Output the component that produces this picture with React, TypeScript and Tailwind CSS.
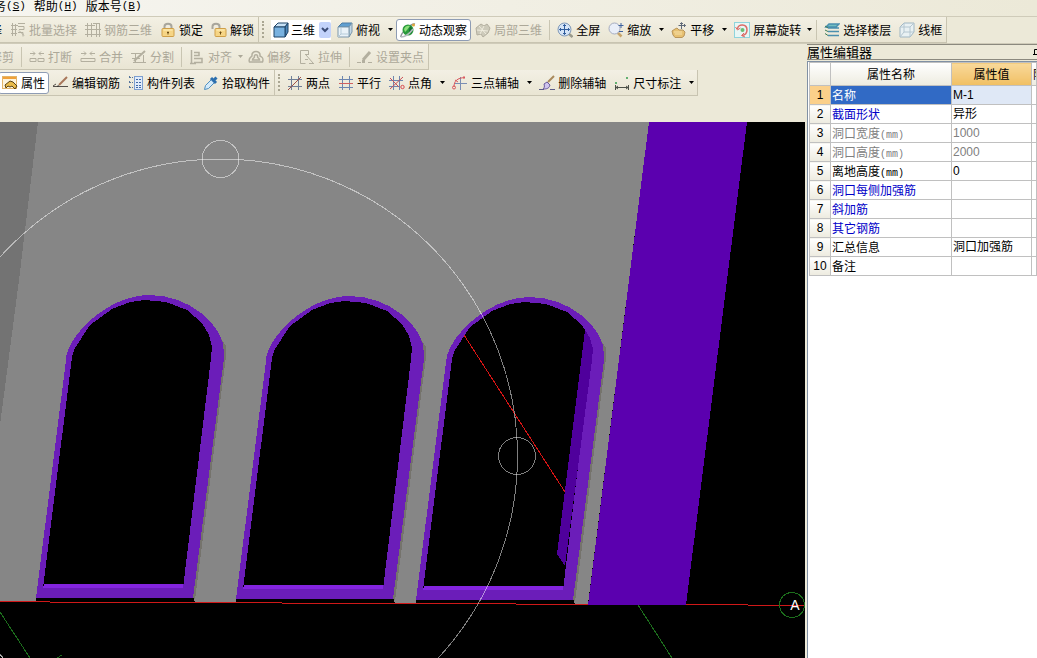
import React from 'react';
import clsx from 'clsx';

type IconProps = { children: React.ReactNode };

function Icon({ children }: IconProps) {
  return (
    <svg viewBox="0 0 16 16" className="h-4 w-4 shrink-0" fill="none" aria-hidden="true">
      {children}
    </svg>
  );
}

const GRAY = '#b3af9f';

const icons = {
  batch: (
    <Icon>
      <path d="M2.5 1v13M5.5 2v12M1 3.5h7M1 7.5h6M1 11.5h6M8 1.5h7M8 4.5h6v3H9M8 10.5h5v4M9 8.5l5 5" stroke={GRAY} />
    </Icon>
  ),
  rebar3d: (
    <Icon>
      <path d="M2.5 1v14M6.5 1v14M11.5 1v14M14.5 1v14M0 3.5h10M0 7.5h16M0 12.5h16M8 1.5h7" stroke={GRAY} />
    </Icon>
  ),
  lock: (
    <Icon>
      <path d="M4.5 8V4.5C4.5 .8 11.5 .8 11.5 4.5V8" stroke="#a8a69c" strokeWidth="2" />
      <rect x="2" y="6.5" width="12" height="8" rx="1" fill="#f6d585" stroke="#cf9f48" />
      <path d="M3.5 8h9" stroke="#fff1bd" />
      <path d="M8 9.5v3M7 10.5h2" stroke="#6b4a12" />
    </Icon>
  ),
  unlock: (
    <Icon>
      <path d="M1.5 7V4.5C1.5 .8 8.5 .8 8.5 4.5V7" stroke="#a8a69c" strokeWidth="2" />
      <rect x="4" y="6.5" width="11" height="8" rx="1" fill="#f6d585" stroke="#cf9f48" />
      <path d="M5.5 8h8" stroke="#fff1bd" />
      <path d="M9.5 9.5v3M8.5 10.5h2" stroke="#6b4a12" />
    </Icon>
  ),
  cube: (
    <Icon>
      <path d="M1 5l4-4h10l-3 4z" fill="#c9e2f6" stroke="#1f4468" strokeLinejoin="round" />
      <path d="M12 5l3-4v9l-3 5z" fill="#4d86b8" stroke="#1f4468" strokeLinejoin="round" />
      <path d="M1 5h11v10H1z" fill="#79b2e0" stroke="#1f4468" strokeLinejoin="round" />
    </Icon>
  ),
  topView: (
    <Icon>
      <path d="M1 5l4-4h10l-3 4z" fill="#5f9fd0" stroke="#4c7da5" strokeLinejoin="round" />
      <path d="M12 5l3-4v9l-3 5z" fill="#c3d8e8" stroke="#7d97aa" strokeLinejoin="round" />
      <path d="M1 5h11v10H1z" fill="#e9f2f8" stroke="#7d97aa" strokeLinejoin="round" />
      <path d="M4 6v6l-3 3M4 12h8" stroke="#b6cbd9" />
    </Icon>
  ),
  orbit: (
    <Icon>
      <path d="M1 15C0 12 11 1 15 2" stroke="#8b9298" strokeWidth="1.5" />
      <circle cx="8" cy="8" r="5.5" fill="#2a9a3c" />
      <path d="M4 7c1-3 4-4 6-3L7 8l-2 2z" fill="#8be07a" />
      <path d="M10 4l3 3-2 5-2-3z" fill="#176d35" />
      <path d="M1 15C5 15 10 11 13 7" stroke="#b4bac0" strokeWidth="1.5" />
      <circle cx="13.5" cy="3" r="1.5" fill="#e0a53a" />
    </Icon>
  ),
  local3d: (
    <Icon>
      <path d="M1 6l5-4 3 2 3-2 3 4-2 5-5 4-2-3-4 1z" fill="#cdcaba" stroke={GRAY} />
      <path d="M4 4l7 8M9 4l-4 8M2 8l11 1" stroke="#f0eddf" />
    </Icon>
  ),
  fit: (
    <Icon>
      <path d="M12 12l3.5 3" stroke="#9a9a8c" strokeWidth="2.5" />
      <circle cx="7.5" cy="7.5" r="6.5" fill="#d5e4f6" stroke="#8099b8" />
      <path d="M7.5 2.5v10M2.5 7.5h10M6 4l1.5-1.5L9 4M6 11l1.5 1.5L9 11M4 6L2.5 7.5 4 9M11 6l1.5 1.5L11 9" stroke="#2f5c9c" />
    </Icon>
  ),
  zoom: (
    <Icon>
      <path d="M9.5 10.5l4 4" stroke="#c7a56c" strokeWidth="2.5" />
      <circle cx="6.5" cy="6.5" r="5.5" fill="#e9eef8" stroke="#a5acc0" />
      <path d="M13 1v5M10.5 3.5h5M11 9.5h4" stroke="#3d62a0" />
    </Icon>
  ),
  pan: (
    <Icon>
      <path d="M1 9l3-2 2-1 2 2h4l2 2-1 4-2 1.5H4L2 13z" fill="#e7c172" stroke="#b9955a" />
      <path d="M3 10h8M4 12h7" stroke="#f7e0a8" />
      <path d="M10.5 1v6M7.5 3.5h7M9 2l1.5-1.5L12 2M13 2l1.5 1.5L13 5" stroke="#5e6878" />
    </Icon>
  ),
  rotate: (
    <Icon>
      <rect x=".5" y=".5" width="15" height="15" fill="#e8f6f4" stroke="#8fd4dc" />
      <path d="M3.5 7C4 1.5 13 1.5 13 8c0 3-2 5-5 5.5" stroke="#dd6a65" strokeWidth="1.5" />
      <path d="M1.5 5l2 3 3-2M10 11l-2.5 2.5L11 15" stroke="#dd6a65" />
      <circle cx="8.5" cy="8" r="2" fill="#6bbd73" />
    </Icon>
  ),
  floors: (
    <Icon>
      <path d="M5 2h10l-3 3H2zM4 6h11M4 9.5h11M4 13.5h11" fill="#74bfc0" stroke="#4a8fae" strokeWidth="1.5" />
      <path d="M1 4l3 2M1 8l3 1.5M1 11.5l3 2" stroke="#3c7b55" />
    </Icon>
  ),
  wire: (
    <Icon>
      <path d="M1 5l4-4h10v9l-4 5H1z" fill="#e9f1f3" stroke="#9fb6c3" />
      <path d="M1 5h10v10M11 5l4-4M5 1v9h10M5 10l-4 5" stroke="#b4c6d0" />
    </Icon>
  ),
  breakLine: (
    <Icon>
      <path d="M1 4.5h5M10 4.5h5M4 2.5l2 2-2 2M12 2.5l-2 2 2 2M1 9.5h6v3H1zM9 9.5h6v3H9z" stroke={GRAY} />
    </Icon>
  ),
  merge: (
    <Icon>
      <path d="M1 4.5h5M10 4.5h5M4 2.5l2 2-2 2M12 2.5l-2 2 2 2M1 9.5h14v3H1z" stroke={GRAY} />
    </Icon>
  ),
  split: (
    <Icon>
      <path d="M0 4.5h10M2 13.5h13M1 9.5h8M4.5 4v9M12.5 6v7" stroke={GRAY} />
      <path d="M3 12L14 2" stroke={GRAY} strokeWidth="2" />
    </Icon>
  ),
  align: (
    <Icon>
      <path d="M2.5 1v14M5 3.5h5v3H5M5 9.5h8v4H5M1 14.5h6" stroke={GRAY} strokeWidth="1.5" />
    </Icon>
  ),
  offset: (
    <Icon>
      <path d="M1.5 13C0 9 3 8 4 7 3 1 13 1 12 7c2 1 4 2 2.5 6zM4.5 11c0-2 2-2 2-3-1-3 4-3 3 0 0 1 2 1 2 3z" stroke={GRAY} strokeWidth="1.5" />
    </Icon>
  ),
  stretch: (
    <Icon>
      <path d="M9.5 5V1.5H1.5v13h5M6 5.5h4M6 10.5h3M7 6l7 8M10 14.5h5" stroke={GRAY} />
    </Icon>
  ),
  grip: (
    <Icon>
      <path d="M0 13.5h4M11 13.5h4" stroke={GRAY} />
      <path d="M6 11l7-8" stroke={GRAY} strokeWidth="3" />
      <path d="M5 11h3v3H5z" fill={GRAY} />
    </Icon>
  ),
  props: (
    <Icon>
      <rect x=".5" y="1.5" width="14" height="12" fill="#fdf4dc" stroke="#e3b56a" />
      <path d="M1 3h13" stroke="#f0a13a" strokeWidth="2" />
      <path d="M3 10l5-4 3 1 4 4-2 3-3-3-2 1-2-1-2 2z" fill="#e9bb4a" stroke="#584012" />
    </Icon>
  ),
  editRebar: (
    <Icon>
      <path d="M0 11.5h15M0 11l3-2" stroke="#55504a" />
      <path d="M6 10l8-8" stroke="#a8765a" strokeWidth="2" />
      <path d="M4 12l2-1-1-1z" fill="#222" />
    </Icon>
  ),
  list: (
    <Icon>
      <path d="M1 2.5h4M1 7.5h4M1 12.5h4M1.5 1v3M1.5 6v3M1.5 11v3" stroke="#56749c" strokeDasharray="2 1" />
      <rect x="6.5" y="1.5" width="8" height="13" fill="#e1ecfa" stroke="#7d9fd0" />
      <path d="M8 4.5h5M8 7.5h5M8 10.5h5M8 12.5h5" stroke="#4069a8" strokeDasharray="2 1" />
    </Icon>
  ),
  picker: (
    <Icon>
      <path d="M1.5 14.5l1-4 6-6 3 3-6 6z" fill="#d3eafa" stroke="#4f8fc0" />
      <path d="M8 3l5 5M10 6l3.5-3.5" stroke="#2c6fae" strokeWidth="3" />
    </Icon>
  ),
  twoPoint: (
    <Icon>
      <path d="M4.5 1v14M11.5 1v14M1 4.5h14M1 11.5h14" stroke="#6f7f98" />
      <path d="M1 15L14 2" stroke="#a05048" />
    </Icon>
  ),
  parallel: (
    <Icon>
      <path d="M4.5 1v14M11.5 1v14M1 12.5h14M1 4.5h14" stroke="#6d86b0" />
      <path d="M1 8.5h14" stroke="#d06060" />
    </Icon>
  ),
  pointAngle: (
    <Icon>
      <path d="M4.5 1v14M10.5 1v14M0 5.5h14M0 11.5h11" stroke="#6d86b0" />
      <path d="M1 14L14 2M1 3l9 9" stroke="#c85058" />
      <circle cx="13.5" cy="12" r="1.7" stroke="#d84a50" />
    </Icon>
  ),
  threePoint: (
    <Icon>
      <path d="M8.5 2v13M3 8.5h12" stroke="#7a8eb4" />
      <path d="M2 12C2 6 5 3 13 2.5" stroke="#d8555c" />
      <circle cx="2" cy="12.5" r="1.5" stroke="#d8555c" />
      <path d="M3 5l3 2M12 1v3" stroke="#d8555c" />
    </Icon>
  ),
  erase: (
    <Icon>
      <path d="M0 14.5h5M11 14.5h5" stroke="#5c5c88" />
      <path d="M9 7l6-6" stroke="#a98a5c" strokeWidth="2" />
      <path d="M5 9l3-2 3 3c-1 4-4 4-7 4 1-1 2-2 1-5z" fill="#cfc4ee" stroke="#6a5a9c" />
    </Icon>
  ),
  dimension: (
    <Icon>
      <path d="M1.5 10v5M14.5 10v5M2 12.5h12M4 11l-2 1.5L4 14M12 11l2 1.5-2 1.5" stroke="#4c5048" />
      <path d="M1 7l2 2M3 7L1 9M12 2l2 2M14 2l-2 2" stroke="#62b070" />
    </Icon>
  ),
};

type ToolProps = {
  label: string;
  icon?: keyof typeof icons;
  disabled?: boolean;
  pressed?: boolean;
};

function Tool({ label, icon, disabled, pressed }: ToolProps) {
  return (
    <button
      type="button"
      disabled={disabled}
      className={clsx(
        'flex h-[22px] shrink-0 items-center gap-[3px] whitespace-nowrap rounded-[3px] border px-[3px]',
        pressed ? 'border-[#8e9cb4] bg-white' : 'border-transparent',
        disabled ? 'text-[#aca899]' : 'text-black'
      )}
    >
      {icon && icons[icon]}
      {label}
    </button>
  );
}

function Arrow({ label, disabled, narrow }: { label: string; disabled?: boolean; narrow?: boolean }) {
  return (
    <button
      type="button"
      aria-label={label}
      disabled={disabled}
      className={clsx('flex h-[22px] shrink-0 items-center justify-center', narrow ? 'w-2' : 'w-3')}
    >
      <svg viewBox="0 0 5 3" className="h-[3px] w-[5px] shrink-0" aria-hidden="true">
        <path d="M0 0h5L2.5 3z" fill={disabled ? '#aca899' : '#000'} />
      </svg>
    </button>
  );
}

function Separator() {
  return <div className="mx-[3px] h-5 w-px shrink-0 bg-[#c9c5b2]" />;
}

function Grip() {
  return (
    <div className="flex w-2 shrink-0 justify-center self-stretch py-1">
      <div className="w-0 border-l-2 border-dotted border-[#aaa692]" />
    </div>
  );
}

function Bar({ className, children }: { className?: string; children: React.ReactNode }) {
  return (
    <div
      className={clsx(
        'flex h-[26px] items-center border-r border-b border-[#c8c4b1] bg-gradient-to-b from-[#f3f0e4] to-[#e9e5d3]',
        className
      )}
    >
      {children}
    </div>
  );
}

function ViewSelect() {
  return (
    <div className="relative mr-0.5 ml-1 flex h-5 w-[60px] shrink-0 items-center gap-0.5 bg-white pl-0.5">
      {icons.cube}
      <select aria-label="三维" className="h-5 w-full appearance-none bg-transparent outline-none">
        <option>三维</option>
      </select>
      <div className="pointer-events-none absolute right-0 flex h-4 w-3 items-center justify-center rounded-xs bg-[#c3d3fb]">
        <svg viewBox="0 0 8 6" className="h-1.5 w-2" fill="none" aria-hidden="true">
          <path d="M1 1l3 3 3-3" stroke="#3c4d78" strokeWidth="2" />
        </svg>
      </div>
    </div>
  );
}

function Menu({ label, hotkey }: { label: string; hotkey: string }) {
  return (
    <button type="button" className="flex shrink-0 items-start leading-3">
      {label}
      <span className="font-['Liberation_Mono',monospace] text-[11px]">
        (<u>{hotkey}</u>)
      </span>
    </button>
  );
}

const OUTER = 'M36 598L66 360C66 338 106 295 150 295C188 295 224 324 224 352L224 358L193 598Z';
const INNER =
  'M43 588L72 357L75 348L90 325L112 309L130 302L145 300L166 302L187 310L202 323L209 335L212 347L211 358L183 588Z';

function Arch({ dx, dy }: { dx: number; dy: number }) {
  return (
    <g transform={`translate(${dx} ${dy})`}>
      <path d="M217 332L226 346L226 356L195 600L193 598L224 356Z" fill="#75736c" />
      <path d="M36 597H193L195 602H36Z" fill="#000" />
      <path d={OUTER} fill="#6b1db9" />
      <path d={INNER} fill="#000" />
      <path d="M44 584H183V588H43Z" fill="#8424e0" />
    </g>
  );
}

function Viewport() {
  return (
    <svg
      viewBox="0 122 805 536"
      preserveAspectRatio="xMinYMin slice"
      className="min-h-0 w-full flex-1 bg-black"
      shapeRendering="crispEdges"
      fill="none"
    >
      <path d="M0 122H649L588 604L0 601Z" fill="#868686" />
      <path d="M0 122H38L19 280L0 425Z" fill="#737373" />
      <Arch dx={0} dy={0} />
      <Arch dx={200} dy={1} />
      <Arch dx={380} dy={2} />
      <path d="M585 330L590 338L593 349L592 360L565 566L557 554Z" fill="#4f009c" />
      <path
        d="M0 601H50V602H0ZM50 602H282V603H50ZM282 603H516V604H282ZM516 604H748V605H516ZM748 605H805V606H748Z"
        fill="#d01818"
      />
      <path d="M649 122H747L686 605H588Z" fill="#5b00af" />
      <path d="M464 335L565 492" stroke="#d81414" />
      <path d="M0 612L30 658M638 605L672 658M57 658L62 655" stroke="#1c6e1c" />
      <g stroke="#fff" strokeOpacity=".5">
        <circle cx="220.5" cy="456" r="297" />
        <circle cx="220.5" cy="159" r="18.5" />
        <circle cx="517" cy="456" r="18.5" />
        <path d="M0 654L3 658" />
      </g>
      <circle cx="792" cy="605" r="12.5" stroke="#1c6e1c" />
      <text x="795" y="610" textAnchor="middle" fill="#fff" className="font-['Liberation_Sans',sans-serif] text-sm">
        A
      </text>
    </svg>
  );
}

type Row = { name: string; unit?: string; value?: string; tone?: 'blue' | 'gray' };

const rows: Row[] = [
  { name: '名称', value: 'M-1' },
  { name: '截面形状', value: '异形', tone: 'blue' },
  { name: '洞口宽度', unit: '(mm)', value: '1000', tone: 'gray' },
  { name: '洞口高度', unit: '(mm)', value: '2000', tone: 'gray' },
  { name: '离地高度', unit: '(mm)', value: '0' },
  { name: '洞口每侧加强筋', tone: 'blue' },
  { name: '斜加筋', tone: 'blue' },
  { name: '其它钢筋', tone: 'blue' },
  { name: '汇总信息', value: '洞口加强筋' },
  { name: '备注' },
];

function PropertyEditor() {
  return (
    <aside className="flex w-[230px] shrink-0 flex-col overflow-hidden">
      <div className="flex h-4 items-center justify-between border-y border-[#8b897e]">
        <h2 className="text-[13px] leading-[14px]">属性编辑器</h2>
        <svg viewBox="0 0 4 9" className="h-[9px] w-1" aria-hidden="true">
          <path d="M4 1.5H1.5V6.5M0 6.5H4" stroke="#000" fill="none" />
        </svg>
      </div>
      <div className="mt-px flex-1 border-t border-l border-[#8090a4] bg-white pl-px">
        <table className="w-full table-fixed border-collapse text-left [&_td]:border [&_td]:border-[#c0c0c0] [&_th]:border [&_th]:border-[#c0c0c0] [&_th]:font-normal">
          <thead>
            <tr className="h-[23px] bg-gradient-to-b from-white to-[#edebdf] text-center">
              <th className="w-[21px]" />
              <th className="w-[121px] text-center">属性名称</th>
              <th className="w-20 bg-gradient-to-b from-[#f9d99a] to-[#f0bf62] text-center">属性值</th>
              <th className="overflow-hidden whitespace-nowrap pl-px">附加</th>
            </tr>
          </thead>
          <tbody>
            {rows.map((row, i) => (
              <tr
                key={row.name}
                className={clsx(
                  'h-[19px] leading-4',
                  row.tone === 'blue' && 'text-[#0000c8]',
                  row.tone === 'gray' && 'text-[#808080]'
                )}
              >
                <th
                  scope="row"
                  className={clsx(
                    "text-center font-['Liberation_Sans',sans-serif] text-black",
                    i === 0 ? 'bg-[#fbd08a]' : 'bg-gradient-to-b from-white to-[#edebdf]'
                  )}
                >
                  {i + 1}
                </th>
                <td className={clsx('whitespace-nowrap pl-px', i === 0 && 'bg-[#316ac5] text-white')}>
                  {row.name}
                  {row.unit && (
                    <span className="font-['Liberation_Mono',monospace] text-[10px] leading-none">{row.unit}</span>
                  )}
                </td>
                <td
                  className={clsx(
                    "whitespace-nowrap pl-px font-['Liberation_Sans','Noto_Sans_CJK_SC',sans-serif]",
                    i === 0 && 'bg-[#dfe8f6]',
                    row.tone === 'blue' && 'text-black'
                  )}
                >
                  {row.value}
                </td>
                <td />
              </tr>
            ))}
          </tbody>
        </table>
      </div>
    </aside>
  );
}

function App() {
  return (
    <div className="flex h-screen flex-col overflow-hidden bg-[#ece9d8] font-['Noto_Sans_CJK_SC',sans-serif] text-xs text-black">
      <nav className="-ml-[18px] flex h-4 shrink-0 items-start gap-2 bg-gradient-to-r from-[#f6f5f0] to-[#ece9d8]">
        <Menu label="服务" hotkey="S" />
        <Menu label="帮助" hotkey="H" />
        <Menu label="版本号" hotkey="B" />
      </nav>

      <div className="flex h-7 shrink-0 border-t border-b border-[#cfcbb9]">
        <Bar className="-ml-[26px]">
          <Tool label="选择" />
          <Tool icon="batch" label="批量选择" disabled />
          <Tool icon="rebar3d" label="钢筋三维" disabled />
          <Tool icon="lock" label="锁定" />
          <Tool icon="unlock" label="解锁" />
        </Bar>
        <Bar>
          <Grip />
          <ViewSelect />
          <Tool icon="topView" label="俯视" />
          <Arrow label="俯视" />
          <Tool icon="orbit" label="动态观察" pressed />
          <Tool icon="local3d" label="局部三维" disabled />
          <Separator />
          <Tool icon="fit" label="全屏" />
          <Tool icon="zoom" label="缩放" />
          <Arrow label="缩放" />
          <Tool icon="pan" label="平移" />
          <Arrow label="平移" />
          <Tool icon="rotate" label="屏幕旋转" />
          <Arrow label="屏幕旋转" narrow />
          <Separator />
          <Tool icon="floors" label="选择楼层" />
          <Tool icon="wire" label="线框" />
        </Bar>
      </div>

      <div className="flex min-h-0 flex-1">
        <main className="mr-0.5 flex min-w-0 flex-1 flex-col overflow-hidden">
          <div className="flex shrink-0">
            <Bar className="-ml-3.5">
              <Tool label="修剪" disabled />
              <Separator />
              <Tool icon="breakLine" label="打断" disabled />
              <Tool icon="merge" label="合并" disabled />
              <Tool icon="split" label="分割" disabled />
              <Separator />
              <Tool icon="align" label="对齐" disabled />
              <Arrow label="对齐" disabled narrow />
              <Tool icon="offset" label="偏移" disabled />
              <Tool icon="stretch" label="拉伸" disabled />
              <Separator />
              <Tool icon="grip" label="设置夹点" disabled />
            </Bar>
          </div>
          <div className="mb-[26px] flex shrink-0">
            <Bar className="-ml-0.5">
              <Tool icon="props" label="属性" pressed />
              <Tool icon="editRebar" label="编辑钢筋" />
              <Tool icon="list" label="构件列表" />
              <Tool icon="picker" label="拾取构件" />
            </Bar>
            <Bar>
              <Grip />
              <Tool icon="twoPoint" label="两点" />
              <Tool icon="parallel" label="平行" />
              <Tool icon="pointAngle" label="点角" />
              <Arrow label="点角" />
              <Tool icon="threePoint" label="三点辅轴" />
              <Arrow label="三点辅轴" />
              <Tool icon="erase" label="删除辅轴" />
              <Tool icon="dimension" label="尺寸标注" />
              <Arrow label="尺寸标注" />
            </Bar>
          </div>
          <Viewport />
        </main>
        <PropertyEditor />
      </div>
    </div>
  );
}

export default App;
